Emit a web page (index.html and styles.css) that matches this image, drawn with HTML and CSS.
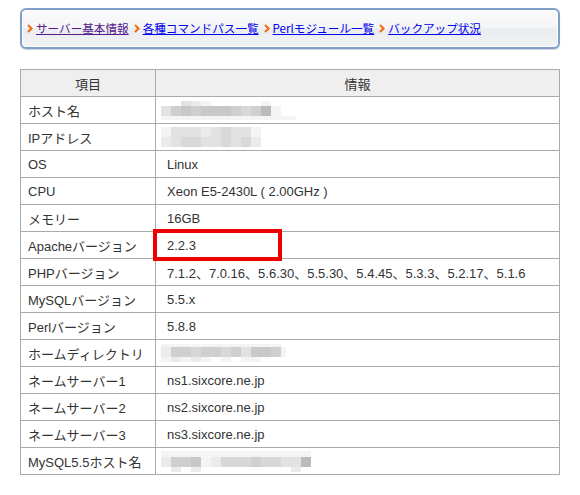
FILE: index.html
```html
<!DOCTYPE html>
<html lang="ja">
<head>
<meta charset="utf-8">
<title>サーバー基本情報</title>
<link rel="stylesheet" href="styles.css">
</head>
<body>
<div class="nav">
  <span class="chev"><svg width="6" height="9" viewBox="0 0 6 9"><polyline points="1,1 4.6,4.5 1,8" fill="none" stroke="#f26a10" stroke-width="2"/></svg></span><a class="visited" href="#">サーバー基本情報</a>
  <span class="chev"><svg width="6" height="9" viewBox="0 0 6 9"><polyline points="1,1 4.6,4.5 1,8" fill="none" stroke="#f26a10" stroke-width="2"/></svg></span><a href="#">各種コマンドパス一覧</a>
  <span class="chev"><svg width="6" height="9" viewBox="0 0 6 9"><polyline points="1,1 4.6,4.5 1,8" fill="none" stroke="#f26a10" stroke-width="2"/></svg></span><a href="#">Perlモジュール一覧</a>
  <span class="chev"><svg width="6" height="9" viewBox="0 0 6 9"><polyline points="1,1 4.6,4.5 1,8" fill="none" stroke="#f26a10" stroke-width="2"/></svg></span><a href="#">バックアップ状況</a>
</div>

<table class="info">
  <colgroup><col class="c-key"><col class="c-val"></colgroup>
  <tr><th>項目</th><th>情報</th></tr>
  <tr><td class="k">ホスト名</td><td class="v">
    <div class="mosaic">
      <div class="mrow r5"><i></i><i></i><i class="s3"></i><i class="s2"></i><i class="s1"></i><i></i><i></i><i></i><i></i><i></i><i class="s1"></i></div>
      <div class="mrow r10"><i class="s3"></i><i class="s5"></i><i class="s6"></i><i class="s5"></i><i class="s6"></i><i class="s6"></i><i class="s6"></i><i class="s5"></i><i class="s4"></i><i class="s5"></i><i class="s7"></i><i class="s1"></i></div>
      <div class="mrow r4"><i class="s1"></i><i class="s1"></i><i class="s1"></i><i class="s1"></i><i class="s1"></i><i class="s1"></i><i class="s1"></i><i class="s1"></i><i class="s1"></i><i class="s1"></i><i class="s1"></i><i class="s1"></i><i class="s1"></i><i class="s1 half"></i></div>
    </div>
  </td></tr>
  <tr><td class="k">IPアドレス</td><td class="v">
    <div class="mosaic">
      <div class="mrow r10"><i class="s1"></i><i class="s3"></i><i class="s3"></i><i class="s3"></i><i class="s2"></i><i class="s3"></i><i class="s4"></i><i class="s3"></i><i class="s3"></i><i class="s1"></i></div>
      <div class="mrow r10"><i class="s2"></i><i class="s3"></i><i class="s4"></i><i class="s4"></i><i class="s3"></i><i class="s3"></i><i class="s4"></i><i class="s3"></i><i class="s4"></i><i class="s2"></i></div>
    </div>
  </td></tr>
  <tr><td class="k">OS</td><td class="v">Linux</td></tr>
  <tr><td class="k">CPU</td><td class="v">Xeon E5-2430L ( 2.00GHz )</td></tr>
  <tr><td class="k">メモリー</td><td class="v">16GB</td></tr>
  <tr><td class="k">Apacheバージョン</td><td class="v hlcell">2.2.3<span class="hl"></span></td></tr>
  <tr><td class="k">PHPバージョン</td><td class="v">7.1.2、7.0.16、5.6.30、5.5.30、5.4.45、5.3.3、5.2.17、5.1.6</td></tr>
  <tr><td class="k">MySQLバージョン</td><td class="v">5.5.x</td></tr>
  <tr><td class="k">Perlバージョン</td><td class="v">5.8.8</td></tr>
  <tr><td class="k">ホームディレクトリ</td><td class="v">
    <div class="mosaic">
      <div class="mrow r3"><i class="s1"></i><i class="s1"></i><i class="s1"></i><i class="s1"></i><i class="s1"></i><i class="s1"></i><i class="s1"></i><i class="s1"></i><i class="s1"></i><i class="s1"></i><i class="s1"></i><i class="s1"></i></div>
      <div class="mrow r10"><i class="s2"></i><i class="s5"></i><i class="s5"></i><i class="s4"></i><i class="s5"></i><i class="s5"></i><i class="s4"></i><i class="s5"></i><i class="s3"></i><i class="s6"></i><i class="s6"></i><i class="s5"></i><i class="s1 half"></i></div>
      <div class="mrow r5"><i class="s1"></i><i class="s2"></i><i class="s1"></i><i class="s2"></i><i class="s1"></i><i></i><i class="s1"></i><i></i><i class="s1"></i><i class="s1"></i></div>
    </div>
  </td></tr>
  <tr><td class="k">ネームサーバー1</td><td class="v">ns1.sixcore.ne.jp</td></tr>
  <tr><td class="k">ネームサーバー2</td><td class="v">ns2.sixcore.ne.jp</td></tr>
  <tr><td class="k">ネームサーバー3</td><td class="v">ns3.sixcore.ne.jp</td></tr>
  <tr><td class="k">MySQL5.5ホスト名</td><td class="v">
    <div class="mosaic">
      <div class="mrow r6"><i class="s1"></i><i class="s1"></i><i class="s1"></i><i class="s1"></i><i class="s1"></i><i class="s1"></i><i class="s1"></i><i class="s1"></i><i class="s1"></i><i class="s1"></i><i class="s1"></i><i class="s1"></i><i class="s1"></i><i class="s1"></i><i class="s1"></i></div>
      <div class="mrow r10"><i class="s2"></i><i class="s5"></i><i class="s5"></i><i class="s6"></i><i class="s1"></i><i class="s2"></i><i class="s4"></i><i class="s4"></i><i class="s4"></i><i class="s5"></i><i class="s4"></i><i class="s4"></i><i class="s3"></i><i class="s3"></i><i class="s7"></i></div>
      <div class="mrow r5"><i></i><i class="s2"></i><i></i><i class="s2"></i><i></i><i></i><i></i><i></i><i></i><i></i><i></i><i></i><i></i><i class="s2"></i></div>
    </div>
  </td></tr>
</table>
</body>
</html>
```

FILE: styles.css
```css
html, body {
  margin: 0;
  background: #fff;
}
body {
  padding: 8px 20px;
  font-family: "Liberation Sans", "Noto Sans CJK JP", sans-serif;
}

.nav {
  width: 540px;
  height: 41px;
  box-sizing: border-box;
  border: 2px solid #7f9fc9;
  border-radius: 6px;
  background: linear-gradient(#fbfbfc 0%, #f4f5f6 48%, #eaecef 52%, #f1f2f4 100%);
  box-shadow: inset 0 0 0 1px #ffffff, 0 1px 1px rgba(60, 80, 110, 0.25);
  display: flex;
  align-items: center;
  padding: 0 0 1px 5px;
  font-family: "Noto Sans CJK JP", "Liberation Sans", sans-serif;
  font-size: 11.6px;
}
.nav a {
  color: #0000ee;
  text-decoration: underline;
  margin-right: 5px;
  line-height: 14px;
}
.nav a.visited {
  color: #551a8b;
}
.chev {
  display: inline-flex;
  align-items: center;
  margin-right: 3px;
}
.chev svg {
  display: block;
}

.info {
  margin-top: 20px;
  width: 540px;
  border-collapse: collapse;
  font-size: 13px;
  color: #333;
}
.c-key { width: 135px; }
.info th,
.info td {
  border: 1px solid #aaaaaa;
  height: 27px;
  padding: 0;
  box-sizing: border-box;
  vertical-align: middle;
}
.info th {
  background: #efefef;
  font-weight: normal;
  text-align: center;
}
.info td.k {
  padding-left: 7px;
}
.info td.v {
  padding-left: 11px;
}
.hlcell {
  position: relative;
}
.hl {
  position: absolute;
  left: -3px;
  top: -3px;
  width: 129px;
  height: 32px;
  box-sizing: border-box;
  border: 4px solid #f00000;
}

.mosaic {
  display: flex;
  flex-direction: column;
  margin-left: -6px;
}
.mrow {
  display: flex;
}
.mrow i {
  display: block;
  width: 10px;
  flex: none;
}
.mrow i.half { width: 5px; }
.r3 i { height: 3px; }
.r4 i { height: 4px; }
.r5 i { height: 5px; }
.r6 i { height: 6px; }
.r10 i { height: 10px; }
.s1 { background: #f4f4f4; }
.s2 { background: #ebebeb; }
.s3 { background: #e2e2e2; }
.s4 { background: #d8d8d8; }
.s5 { background: #cfcfcf; }
.s6 { background: #c8c8c8; }
.s7 { background: #bbbbbb; }
```
